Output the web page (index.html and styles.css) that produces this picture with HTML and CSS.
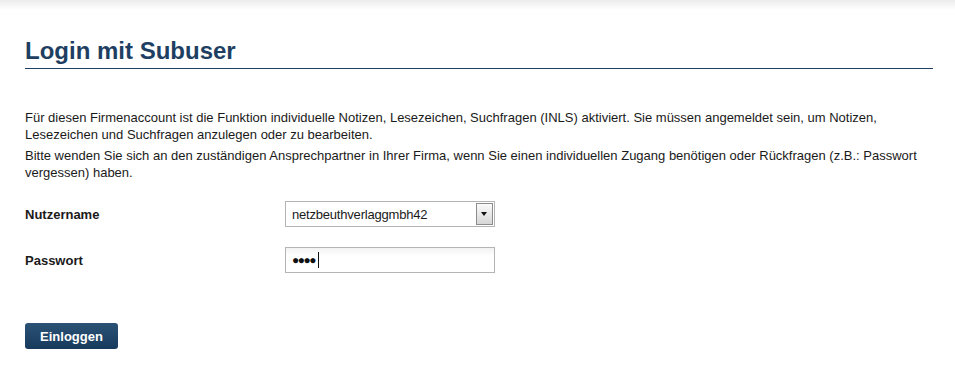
FILE: index.html
```html
<!DOCTYPE html>
<html lang="de">
<head>
    <meta charset="UTF-8">
    <title>Login mit Subuser</title>
    <link rel="stylesheet" href="styles.css">
</head>
<body>
    <div class="top-shadow"></div>

    <main class="content">
        <h1 class="title">Login mit Subuser</h1>

        <p class="info">Für diesen Firmenaccount ist die Funktion individuelle Notizen, Lesezeichen, Suchfragen (INLS) aktiviert. Sie müssen angemeldet sein, um Notizen, Lesezeichen und Suchfragen anzulegen oder zu bearbeiten.</p>
        <p class="info info-second">Bitte wenden Sie sich an den zuständigen Ansprechpartner in Ihrer Firma, wenn Sie einen individuellen Zugang benötigen oder Rückfragen (z.B.: Passwort vergessen) haben.</p>

        <form class="login-form">
            <div class="form-row">
                <label class="form-label" for="user">Nutzername</label>
                <div class="select-box">
                    <span class="select-value">netzbeuthverlaggmbh42</span>
                    <span class="select-arrow"></span>
                </div>
            </div>

            <div class="form-row">
                <label class="form-label" for="pass">Passwort</label>
                <div class="text-box">
                    <span class="dots">&#9679;&#9679;&#9679;&#9679;</span><span class="caret"></span>
                </div>
            </div>

            <button type="button" class="login-button">Einloggen</button>
        </form>
    </main>
</body>
</html>
```

FILE: styles.css
```css
* {
    box-sizing: border-box;
    margin: 0;
    padding: 0;
}

body {
    font-family: 'Liberation Sans', Arial, sans-serif;
    background-color: #fff;
    color: #1a1a1a;
    font-size: 13px;
}

.top-shadow {
    height: 10px;
    background: linear-gradient(#ececec, #fff);
}

.content {
    padding: 27px 22px 0 25px;
}

.title {
    font-size: 24px;
    font-weight: bold;
    color: #1e3f62;
    line-height: 28px;
    padding-bottom: 3px;
    border-bottom: 1px solid #1e3f62;
}

.info {
    line-height: 17px;
    margin-top: 40px;
}

.info-second {
    margin-top: 4px;
}

.login-form {
    display: flex;
    flex-direction: column;
    margin-top: 20px;
}

.form-row {
    display: flex;
    align-items: center;
    height: 26px;
    margin-bottom: 20px;
}

.form-label {
    width: 260px;
    font-weight: bold;
    font-size: 13px;
}

.select-box,
.text-box {
    width: 210px;
    height: 26px;
    border: 1px solid #b4b4b4;
    display: flex;
    align-items: center;
    padding-left: 6px;
    font-size: 13px;
}

.select-value {
    flex-grow: 1;
    letter-spacing: -0.2px;
}

.select-arrow {
    width: 17px;
    height: 22px;
    margin-right: 1px;
    border: 1px solid #8c8c8c;
    background: linear-gradient(#fafafa, #d6d6d6);
    position: relative;
}

.select-arrow::after {
    content: '';
    position: absolute;
    left: 4px;
    top: 8px;
    border-left: 3px solid transparent;
    border-right: 3px solid transparent;
    border-top: 4px solid #111;
}

.text-box {
    background: linear-gradient(#f2f2f2, #fff 8px);
}

.dots {
    font-size: 12px;
    letter-spacing: -1.5px;
    color: #111;
}

.caret {
    width: 1px;
    height: 16px;
    background-color: #111;
    margin-left: 3px;
}

.login-button {
    align-self: flex-start;
    margin-top: 30px;
    width: 93px;
    height: 26px;
    border: none;
    border-radius: 3px;
    background: linear-gradient(#2b5276, #173a5c);
    color: #fff;
    font-family: 'Liberation Sans', Arial, sans-serif;
    font-weight: bold;
    font-size: 13px;
    cursor: pointer;
}
```
